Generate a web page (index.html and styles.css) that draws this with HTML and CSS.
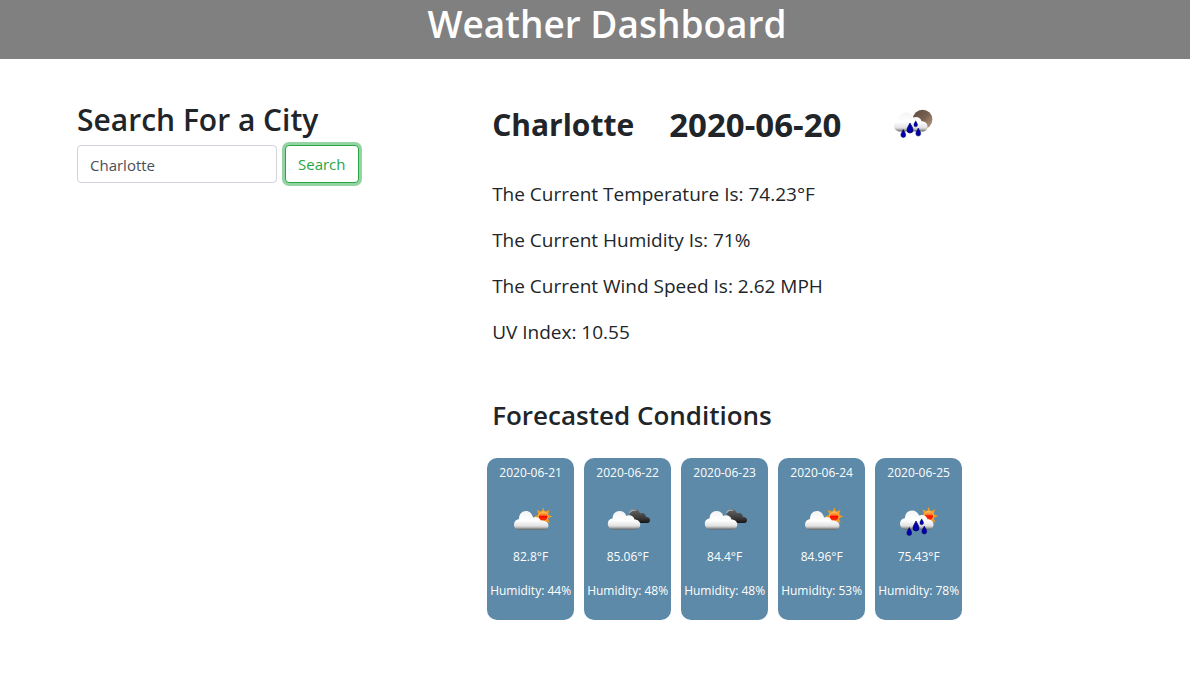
FILE: index.html
```html
<!DOCTYPE html>
<html lang="en">
<head>
<meta charset="utf-8">
<meta name="viewport" content="width=device-width, initial-scale=1">
<title>Weather Dashboard</title>
<link rel="stylesheet" href="styles.css">
</head>
<body>
<svg class="defs" width="0" height="0" aria-hidden="true">
  <defs>
    <linearGradient id="cloudFill" x1="0" y1="0" x2="0" y2="1">
      <stop offset="0" stop-color="#f4f4f6"/><stop offset=".5" stop-color="#fff"/><stop offset=".8" stop-color="#e2e2e2"/><stop offset=".88" stop-color="#bbb"/><stop offset="1" stop-color="#666"/>
    </linearGradient>
    <linearGradient id="darkFill" x1="0" y1="0" x2="0" y2="1">
      <stop offset="0" stop-color="#666"/><stop offset=".65" stop-color="#383838"/><stop offset="1" stop-color="#151515"/>
    </linearGradient>
    <linearGradient id="sunFill" x1="0" y1="0" x2="0" y2="1">
      <stop offset="0" stop-color="#ffc060"/><stop offset=".35" stop-color="#ff7a20"/><stop offset=".5" stop-color="#f60f00"/><stop offset="1" stop-color="#ff3c00"/>
    </linearGradient>
    <linearGradient id="moonFill" x1="0" y1="0" x2="1" y2="1">
      <stop offset="0" stop-color="#5d4c42"/><stop offset=".5" stop-color="#78604f"/><stop offset="1" stop-color="#c3a78f"/>
    </linearGradient>
    <path id="cloud" d="M12 34.500C8.500 34.500 6 32 6 28.500C6 25.500 8 23.500 11 23C11 18.500 14 15.500 18 15.500C21.500 15.500 24 17.500 25 20.500C29 18.800 33 20.800 33.500 24.300C37 24.300 39.500 26.500 39.500 29.500C39.500 32.500 37.500 34.500 34.500 34.500Z" fill="url(#cloudFill)"/>
    <g id="sun">
      <path d="M0-9.200L1.600-4.800L6.300-6.500L4.800-1.800L9.200 0L4.800 1.800L6.500 6.500L1.800 4.800L0 9.200L-1.800 4.800L-6.500 6.500L-4.800 1.800L-9.200 0L-4.800-1.800L-6.300-6.500L-1.600-4.800Z" fill="#f39a1b"/>
      <circle r="4.800" fill="url(#sunFill)" stroke="#ffb84d"/>
    </g>
    <path id="drop" d="M0-5C1-2.500 3-.5 3 2A3 3 0 0 1-3 2C-3-.5-1-2.500 0-5Z" fill="#0000b0" stroke="#00005c" stroke-width=".7"/>
    <g id="rain">
      <use href="#cloud"/>
      <use href="#drop" transform="translate(22 31)"/>
      <use href="#drop" transform="translate(15.300 36.500) scale(.8)"/>
      <use href="#drop" transform="translate(27.700 26.800) scale(.6)"/>
      <use href="#drop" transform="translate(30.300 35) scale(.8)"/>
    </g>
    <symbol id="few" viewBox="0 0 50 50">
      <use href="#sun" transform="translate(37.200 21.500)"/>
      <path d="M13 34.700C10 34.700 8 32.700 8 29.500C8 26.500 10 24.500 13 24C13 19 16 16 20 16C23.500 16 26 18.500 27 22.500C30 21 33.500 22.500 34.500 25.500C39.500 25 42.500 27.500 42.500 30.500C42.500 33 41 34.700 38 34.700Z" fill="url(#cloudFill)"/>
    </symbol>
    <symbol id="broken" viewBox="0 0 50 50">
      <path d="M29 28C24 27 24 22 27 20C26 16 30 13 34 15C36 16 37 17.500 37 18.500C40 17 43 19 43 22C46 22 47 23.500 47 25C47 27 46 28 44.500 28Z" fill="url(#darkFill)"/>
      <path d="M26.500 18C27.500 15.500 30 14.500 33 15.500" fill="none" stroke="#aaa" stroke-width="1.200"/>
      <use href="#cloud" transform="translate(-1 1) scale(.97)"/>
    </symbol>
    <symbol id="rain-day" viewBox="0 0 50 50">
      <use href="#sun" transform="translate(34.800 21)"/><use href="#rain"/>
    </symbol>
    <symbol id="rain-night" viewBox="0 0 50 50">
      <circle cx="34.600" cy="22.500" r="9.800" fill="url(#moonFill)"/><use href="#rain"/>
    </symbol>
  </defs>
</svg>

<header class="banner"><h1>Weather Dashboard</h1></header>

<main class="layout">
  <section class="search-panel">
    <h2><label for="city">Search For a City</label></h2>
    <form class="search" onsubmit="return false">
      <input class="search-input" id="city" type="text" value="Charlotte">
      <button class="search-button" type="submit">Search</button>
    </form>
  </section>

  <section>
    <div class="current-head">
      <h2 class="current-city">Charlotte</h2>
      <h2 class="current-date">2020-06-20</h2>
      <svg class="icon" role="img" aria-label="Rain"><use href="#rain-night"/></svg>
    </div>
    <div class="current">
      <p>The Current Temperature Is: 74.23°F</p>
      <p>The Current Humidity Is: 71%</p>
      <p>The Current Wind Speed Is: 2.62 MPH</p>
      <p>UV Index: 10.55</p>
    </div>
    <h3>Forecasted Conditions</h3>
    <div class="forecast">
      <article class="card"><p>2020-06-21</p><svg class="icon" role="img" aria-label="Few clouds"><use href="#few"/></svg><p>82.8°F</p><p>Humidity: 44%</p></article>
      <article class="card"><p>2020-06-22</p><svg class="icon" role="img" aria-label="Broken clouds"><use href="#broken"/></svg><p>85.06°F</p><p>Humidity: 48%</p></article>
      <article class="card"><p>2020-06-23</p><svg class="icon" role="img" aria-label="Broken clouds"><use href="#broken"/></svg><p>84.4°F</p><p>Humidity: 48%</p></article>
      <article class="card"><p>2020-06-24</p><svg class="icon" role="img" aria-label="Few clouds"><use href="#few"/></svg><p>84.96°F</p><p>Humidity: 53%</p></article>
      <article class="card"><p>2020-06-25</p><svg class="icon" role="img" aria-label="Rain"><use href="#rain-day"/></svg><p>75.43°F</p><p>Humidity: 78%</p></article>
    </div>
  </section>
</main>
</body>
</html>
```
FILE: styles.css
```css
*, *::before, *::after { box-sizing: border-box; }

body {
  margin: 0;
  background: #fff;
  color: #212529;
  font-family: "Segoe UI", "Open Sans", "Noto Sans", sans-serif;
  font-size: 16px;
  line-height: 24px;
}

h1, h2, h3, p { margin: 0; }
h1, h2, h3 { font-weight: 600; }

.defs { position: absolute; }

.banner {
  padding: 0 0 11px 24px;
  background: #808080;
  color: #fff;
  text-align: center;
}
h1 { font-size: 37px; line-height: 48px; }
h2 { font-size: 30px; line-height: 38px; }
h3 { font-size: 26px; line-height: 34px; }

.layout {
  display: grid;
  grid-template-columns: 3fr 5fr;
  padding: 38px 6px 24px 77px;
}

.search-panel { padding-top: 4px; }
.search {
  display: flex;
  gap: 8px;
  margin-top: 6px;
}
.search-input {
  width: 200px;
  height: 38px;
  padding: 7px 12px 5px;
  border: 1px solid #ced4da;
  border-radius: 4px;
  color: #495057;
  font: inherit;
  font-size: 15px;
}
.search-button {
  height: 38px;
  padding: 0 12px;
  border: 1px solid #28a745;
  border-radius: 4px;
  background: #fff;
  color: #28a745;
  font: inherit;
  font-size: 15px;
  box-shadow: 0 0 0 3px #94d3a2;
}

.icon { display: block; width: 50px; height: 50px; }

.current-head {
  display: flex;
  align-items: flex-start;
}
.current-city, .current-date { font-weight: 700; line-height: 56px; }
.current-city { margin-right: 35px; font-size: 30px; }
.current-date { margin-right: 47px; font-size: 33px; }

.current {
  display: grid;
  gap: 16px;
  margin: 26px 0 51px;
  font-size: 19px;
  line-height: 30px;
}

.forecast {
  display: flex;
  flex-wrap: wrap;
  gap: 10px;
  margin: 26px 0 0 -5px;
}
.card {
  display: flex;
  flex-direction: column;
  align-items: center;
  width: 87px;
  padding: 6px 0 20px;
  border-radius: 10px;
  background: #5d8aa8;
  color: #fff;
  font-size: 12px;
  line-height: 18px;
  white-space: nowrap;
}
.card .icon { margin: 13px 0 3px; }
.card p + p { margin-top: 16px; }
```
